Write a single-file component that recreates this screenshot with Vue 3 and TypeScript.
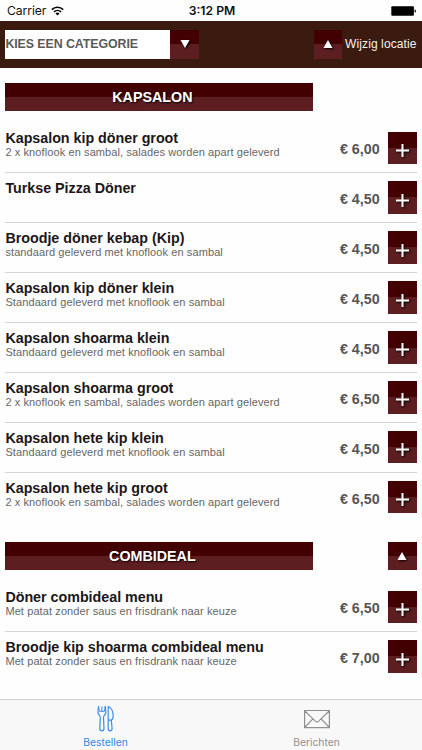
<script setup lang="ts">
interface Item {
  name: string
  note: string
  price: string
}
interface Section {
  title: string
  top: boolean
  items: Item[]
}

const full = '2 x knoflook en sambal, salades worden apart geleverd'
const std = 'Standaard geleverd met knoflook en sambal'
const combi = 'Met patat zonder saus en frisdrank naar keuze'

const sections: Section[] = [
  {
    title: 'KAPSALON',
    top: false,
    items: [
      { name: 'Kapsalon kip döner groot', note: full, price: '6,00' },
      { name: 'Turkse Pizza Döner', note: '', price: '4,50' },
      { name: 'Broodje döner kebap (Kip)', note: 'standaard geleverd met knoflook en sambal', price: '4,50' },
      { name: 'Kapsalon kip döner klein', note: std, price: '4,50' },
      { name: 'Kapsalon shoarma klein', note: std, price: '4,50' },
      { name: 'Kapsalon shoarma groot', note: full, price: '6,50' },
      { name: 'Kapsalon hete kip klein', note: std, price: '4,50' },
      { name: 'Kapsalon hete kip groot', note: full, price: '6,50' },
    ],
  },
  {
    title: 'COMBIDEAL',
    top: true,
    items: [
      { name: 'Döner combideal menu', note: combi, price: '6,50' },
      { name: 'Broodje kip shoarma combideal menu', note: combi, price: '7,00' },
    ],
  },
]
</script>

<template>
  <div class="screen">
    <div class="status">
      <div class="carrier">
        <span>Carrier</span>
        <svg width="13" height="10" viewBox="0 0 13 10" fill="none" stroke="#000" stroke-width="1.6">
          <path d="M0.8 3.6a8.2 8.2 0 0 1 11.4 0M2.9 5.9a5.2 5.2 0 0 1 7.2 0" />
          <path d="M6.5 9.4 4.5 7.4a2.9 2.9 0 0 1 4 0z" fill="#000" stroke="none" />
        </svg>
      </div>
      <span class="clock">3:12 PM</span>
      <svg class="battery" width="26" height="10" viewBox="0 0 26 10">
        <rect x="0.3" y="0.2" width="22.6" height="9.6" rx="1" fill="#000" />
        <path d="M23.6 3.2q1.4.4 1.4 1.8t-1.4 1.8z" fill="#000" />
      </svg>
    </div>

    <header class="bar">
      <div class="select">
        <div class="field">KIES EEN CATEGORIE</div>
        <button class="btn" type="button">
          <svg class="tri" width="10" height="8" viewBox="0 0 10 8"><path d="M.5 0h9L5 8z" fill="#fff" /></svg>
        </button>
      </div>
      <div class="place">
        <button class="btn" type="button">
          <svg class="tri" width="10" height="8" viewBox="0 0 10 8"><path d="M.5 8h9L5 0z" fill="#fff" /></svg>
        </button>
        <span>Wijzig locatie</span>
      </div>
    </header>

    <main class="menu">
      <section v-for="s in sections" :key="s.title" class="section">
        <div class="heading">
          <h2>{{ s.title }}</h2>
          <button v-if="s.top" class="btn" type="button">
            <svg class="tri" width="10" height="8" viewBox="0 0 10 8"><path d="M.5 8h9L5 0z" fill="#fff" /></svg>
          </button>
        </div>
        <ul>
          <li v-for="i in s.items" :key="i.name">
            <div class="info">
              <div class="name">{{ i.name }}</div>
              <div class="note">{{ i.note }}</div>
            </div>
            <span class="price">€ {{ i.price }}</span>
            <button class="btn add" type="button">
              <svg class="plus" width="13" height="13" viewBox="0 0 13 13"><path d="M6.5 0v13M0 6.5h13" stroke="#fff" stroke-width="2" /></svg>
            </button>
          </li>
        </ul>
      </section>
    </main>

    <nav class="tabs">
      <div class="tab active">
        <svg width="18" height="28" viewBox="0 0 18 28" fill="none" stroke="#3a8ceb" stroke-width="1.2" stroke-linejoin="round" stroke-linecap="round">
          <path d="M1.6 1.6C.9 4 .9 6 1 7.600c.2 2.300 2.300 2.900 2.300 4.900L2.800 23.500c0 3.200 4.200 3.200 4.200 0L6.500 12.500c0-2 2.100-2.600 2.300-4.900C8.900 6 8.900 4 8.200 1.600" />
          <path d="M1.600 1.600 2.400 6.300H7.400L8.200 1.600M4.900 1.800V6.300" stroke-width="1" />
          <path d="M11.200 1.600V23.500c0 3.200 3.900 3.200 3.900 0L14.300 15.200c1.400-1 2-2.800 1.900-5C16 6.200 14 2.300 11.200 1.600zM11.200 15.200h3.100" />
        </svg>
        <span>Bestellen</span>
      </div>
      <div class="tab">
        <svg width="26" height="28" viewBox="0 0 26 28" fill="none" stroke="#8e8e8e" stroke-width="1.2">
          <path d="M.6 5.5h24.800v17.200H.6zM.6 5.800l10.700 10.300q1.700 1.500 3.400 0L25.400 5.800M.6 22.500l8.300-8.600M25.400 22.500l-8.300-8.600" />
        </svg>
        <span>Berichten</span>
      </div>
    </nav>
  </div>
</template>

<style>
body {
  margin: 0;
  background: #fff;
}
</style>

<style scoped>
.screen {
  width: 422px;
  height: 750px;
  display: flex;
  flex-direction: column;
  overflow: hidden;
  background: #fefefe;
  font-family: 'Liberation Sans', Arial, sans-serif;
}
.status {
  height: 21px;
  flex: none;
  display: grid;
  grid-template-columns: 1fr auto 1fr;
  align-items: center;
  padding: 0 5px 0 7px;
  box-sizing: border-box;
  font: 12.2px/21px Inter, sans-serif;
  color: #111;
}
.carrier {
  display: flex;
  align-items: center;
  gap: 5px;
}
.carrier span {
  letter-spacing: -0.1px;
}
.clock {
  font-weight: 600;
}
.battery {
  justify-self: end;
}
.bar {
  height: 46.5px;
  flex: none;
  box-sizing: border-box;
  padding: 9px 5.5px 0 5.4px;
  display: flex;
  justify-content: space-between;
  align-items: flex-start;
  background: #3b1b0f;
}
.select,
.place {
  display: flex;
  align-items: center;
}
.field {
  width: 165px;
  height: 28.5px;
  background: #fff;
  color: #5a5a5a;
  font-weight: bold;
  font-size: 12.4px;
  letter-spacing: -0.08px;
  line-height: 28.5px;
}
.place {
  gap: 3px;
  color: #f5f0ee;
  font-size: 12px;
  letter-spacing: 0.1px;
}
.btn {
  width: 28.5px;
  height: 28.5px;
  flex: none;
  padding: 0;
  border: 0;
  display: flex;
  align-items: center;
  justify-content: center;
  background: linear-gradient(#430003 50%, #5d1e21 50%);
}
.tri,
.plus {
  display: block;
  filter: drop-shadow(1px 1px 1px #000);
}
.menu {
  flex: 1;
  padding: 15.5px 5.4px 0;
}
.heading {
  display: flex;
  justify-content: space-between;
}
.heading .btn,
.add {
  width: 28.8px;
}
h2 {
  width: 308px;
  height: 28.3px;
  margin: 0 0 12px;
  padding-right: 14px;
  box-sizing: border-box;
  background: linear-gradient(#430003 50%, #5d1e21 50%);
  color: #fff;
  font-size: 14.3px;
  line-height: 28.3px;
  text-align: center;
  text-shadow: 1px 1px 2px #000;
}
ul {
  list-style: none;
  margin: 0;
  padding: 0;
}
.section + .section {
  margin-top: 19.5px;
}
li {
  height: 49.9px;
  box-sizing: border-box;
  border-bottom: 1px solid #d4d4d4;
  display: flex;
  align-items: flex-start;
}
li:last-child {
  border-color: transparent;
}
.info {
  flex: 1;
  padding-top: 7px;
}
.name {
  color: #1b1718;
  font-weight: bold;
  font-size: 14.3px;
  letter-spacing: -0.02px;
  line-height: 16px;
}
.note {
  color: #666;
  font-size: 11px;
  letter-spacing: 0.1px;
  line-height: 12px;
}
.price {
  margin: 17px 8.2px 0 0;
  color: #555;
  font-weight: bold;
  font-size: 14.3px;
  line-height: 18px;
}
.add {
  height: 32.5px;
  margin-top: 8.3px;
}
.plus {
  margin-top: 5px;
}
.tabs {
  height: 51px;
  flex: none;
  box-sizing: border-box;
  border-top: 1px solid #cfcfcf;
  background: #f8f8f8;
  display: grid;
  grid-template-columns: 1fr 1fr;
}
.tab {
  display: flex;
  flex-direction: column;
  align-items: center;
  padding-top: 5px;
  color: #929292;
  font: 10.3px/13px Inter, sans-serif;
}
.tab svg {
  margin-bottom: 3px;
}
.tab.active {
  color: #2f86e8;
}
</style>
